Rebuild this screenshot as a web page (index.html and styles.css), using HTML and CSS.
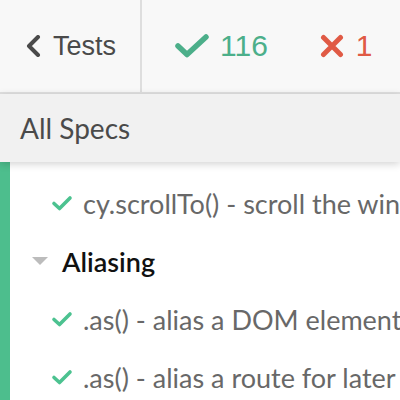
FILE: index.html
```html
<!DOCTYPE html>
<html>
<head>
<meta charset="utf-8">
<link rel="stylesheet" href="styles.css">
</head>
<body>
<div class="app">
  <header class="header">
    <div class="back">
      <svg class="chev" width="16" height="22" viewBox="0 0 16 22"><path d="M13 2 L4 11 L13 20" fill="none" stroke="#4a4a4a" stroke-width="4" stroke-linecap="round" stroke-linejoin="round"/></svg>
      <span>Tests</span>
    </div>
    <div class="stats">
      <div class="stat pass">
        <svg width="36" height="24" viewBox="0 0 36 24"><path d="M4 12 L13 20.5 L32 3" fill="none" stroke="#4caf8a" stroke-width="5.5" stroke-linecap="round" stroke-linejoin="round"/></svg>
        <span>116</span>
      </div>
      <div class="stat fail">
        <svg width="24" height="24" viewBox="0 0 24 24"><path d="M3.5 3.5 L20.5 20.5 M20.5 3.5 L3.5 20.5" stroke="#e05a45" stroke-width="5" stroke-linecap="round"/></svg>
        <span>1</span>
      </div>
    </div>
  </header>
  <div class="specs-bar">All Specs</div>
  <div class="runnable">
    <div class="row test">
      <svg class="check" width="22" height="16" viewBox="0 0 22 16"><path d="M3 8.5 L8.5 13.5 L19 3" fill="none" stroke="#4cc290" stroke-width="3.6" stroke-linecap="round" stroke-linejoin="round"/></svg>
      <span>cy.scrollTo() - scroll the window or element to a position</span>
    </div>
    <div class="row suite">
      <svg class="tri" width="16" height="9" viewBox="0 0 16 9"><path d="M0 0 H16 L8 8 Z" fill="#bcbcbc"/></svg>
      <span>Aliasing</span>
    </div>
    <div class="row test">
      <svg class="check" width="22" height="16" viewBox="0 0 22 16"><path d="M3 8.5 L8.5 13.5 L19 3" fill="none" stroke="#4cc290" stroke-width="3.6" stroke-linecap="round" stroke-linejoin="round"/></svg>
      <span>.as() - alias a DOM element for later use</span>
    </div>
    <div class="row test">
      <svg class="check" width="22" height="16" viewBox="0 0 22 16"><path d="M3 8.5 L8.5 13.5 L19 3" fill="none" stroke="#4cc290" stroke-width="3.6" stroke-linecap="round" stroke-linejoin="round"/></svg>
      <span>.as() - alias a route for later use</span>
    </div>
  </div>
</div>
</body>
</html>
```
FILE: styles.css
```css
* { box-sizing: border-box; }
html, body { margin: 0; padding: 0; }
body { width: 400px; height: 400px; overflow: hidden; background: #fff; }
.app { display: flex; flex-direction: column; height: 400px; }
.header {
  height: 94px;
  flex: none;
  display: flex;
  background: #f8f8f8;
  border-bottom: 2px solid #e0e0e0;
  font-family: "Liberation Sans", Arial, sans-serif;
}
.back {
  width: 142px;
  border-right: 2px solid #dedede;
  display: flex;
  align-items: center;
  padding-left: 25px;
  gap: 12px;
  color: #4a4a4a;
  font-size: 27px;
}
.stats { display: flex; align-items: center; padding-left: 32px; gap: 48px; font-size: 30px; }
.stat { display: flex; align-items: center; gap: 10px; }
.pass { color: #4caf8a; }
.fail { color: #e05a45; gap: 12px; margin-left: 4px; }
.specs-bar {
  height: 68px;
  flex: none;
  background: #f1f1f1;
  display: flex;
  align-items: center;
  padding-left: 20px;
  font-family: Lato, "Open Sans", sans-serif;
  font-size: 28px;
  color: #4a4a4a;
  position: relative;
  z-index: 1;
  box-shadow: 0 2px 8px rgba(0,0,0,0.18);
}
.runnable {
  flex: 1;
  border-left: 10px solid #4dbe8d;
  padding-top: 12px;
  font-family: Lato, "Open Sans", sans-serif;
  white-space: nowrap;
  overflow: hidden;
}
.row { height: 58px; display: flex; align-items: center; }
.test { padding-left: 41px; gap: 10px; font-size: 27px; color: #686868; }
.suite { padding-left: 22px; gap: 14px; font-size: 27px; color: #111; font-weight: 600; }
.check { flex: none; }
.tri { flex: none; }
```
